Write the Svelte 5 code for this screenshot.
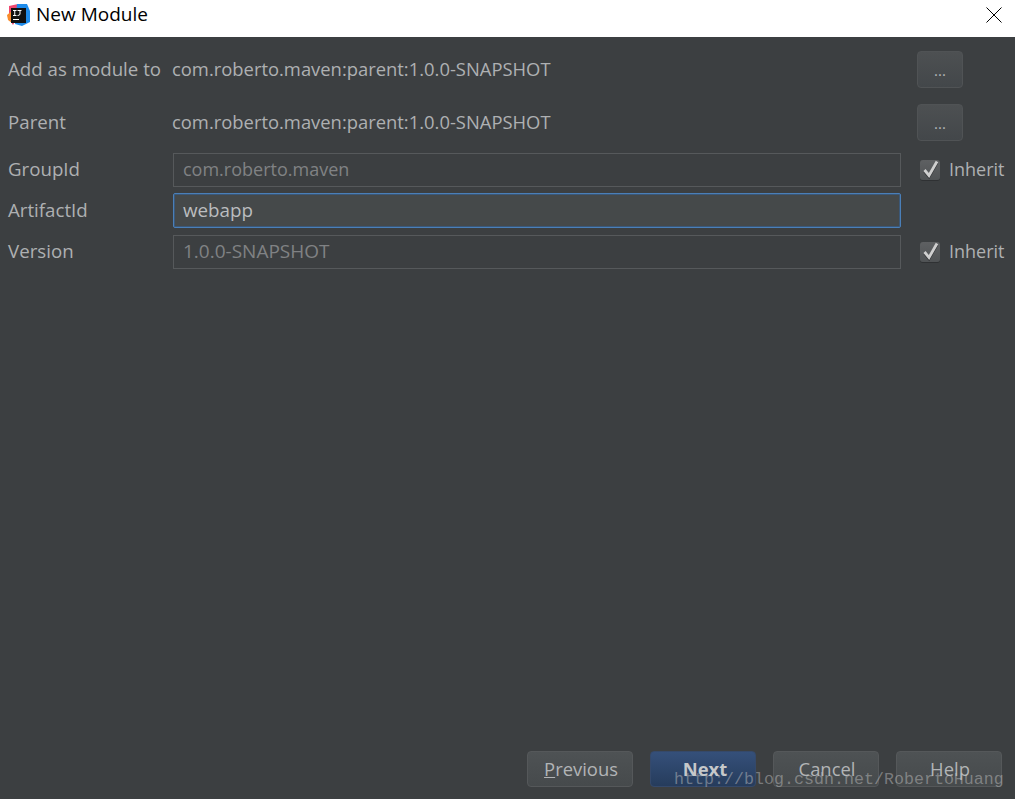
<script>
  const buttons = [
    { label: "Previous", mnemonic: "P", rest: "revious" },
    { label: "Next", primary: true },
    { label: "Cancel" },
    { label: "Help" }
  ];
</script>

<div class="dialog">
  <header class="titlebar">
    <svg class="logo" viewBox="0 0 24 24" width="24" height="24" aria-hidden="true">
      <path d="M2 3 L11 1 L15 6 L6 22 L2 16 Z" fill="#f0476f" />
      <path d="M0 12 L6 7 L9 14 L5 20 L1 17 Z" fill="#f98b2b" />
      <path d="M10 1 L20 1 L23 8 L23 19 L15 23 L8 21 Z" fill="#1f8ceb" />
      <rect x="4" y="5" width="15" height="15" fill="#111" />
      <rect x="6" y="16" width="6" height="1" fill="#fff" />
      <path d="M6 7.5 H9.5 M7.75 7.5 V12.5 M6 12.5 H9.5 M10.5 7.5 H14.5 M13 7.5 V11 Q13 12.5 10.5 12.5" stroke="#fff" stroke-width="1" fill="none" />
    </svg>
    <span class="title">New Module</span>
    <svg class="close" viewBox="0 0 16 16" width="16" height="16" aria-hidden="true">
      <path d="M0.5 0.5 L15.5 15.5 M15.5 0.5 L0.5 15.5" stroke="#000" stroke-width="1" fill="none" />
    </svg>
  </header>

  <main class="body">
    <div class="row tall">
      <span class="label">Add as module to</span>
      <span class="value">com.roberto.maven:parent:1.0.0-SNAPSHOT</span>
      <button class="browse">...</button>
    </div>
    <div class="row tall second">
      <span class="label">Parent</span>
      <span class="value">com.roberto.maven:parent:1.0.0-SNAPSHOT</span>
      <button class="browse">...</button>
    </div>

    <div class="row field first">
      <span class="label">GroupId</span>
      <div class="input disabled group">com.roberto.maven</div>
      <label class="inherit">
        <span class="check">
          <svg viewBox="0 0 20 20" width="20" height="20" aria-hidden="true">
            <path d="M4.5 11 L9 16.5 L17 2.5" stroke="#333537" stroke-width="3" fill="none" />
            <path d="M4.5 10 L9 15.5 L17 1.5" stroke="#cfcfcf" stroke-width="2.8" fill="none" />
          </svg>
        </span>Inherit
      </label>
    </div>
    <div class="row field focus-row">
      <span class="label">ArtifactId</span>
      <div class="input focused">webapp</div>
    </div>
    <div class="row field last">
      <span class="label">Version</span>
      <div class="input disabled version">1.0.0-SNAPSHOT</div>
      <label class="inherit">
        <span class="check">
          <svg viewBox="0 0 20 20" width="20" height="20" aria-hidden="true">
            <path d="M4.5 11 L9 16.5 L17 2.5" stroke="#333537" stroke-width="3" fill="none" />
            <path d="M4.5 10 L9 15.5 L17 1.5" stroke="#cfcfcf" stroke-width="2.8" fill="none" />
          </svg>
        </span>Inherit
      </label>
    </div>

    <footer class="actions">
      {#each buttons as b}
        <button class="action" class:primary={b.primary}>
          {#if b.mnemonic}<u>{b.mnemonic}</u>{b.rest}{:else}{b.label}{/if}
        </button>
      {/each}
    </footer>
  </main>

  <div class="watermark">http://blog.csdn.net/RobertoHuang</div>
</div>

<style>
  :global(body) {
    margin: 0;
    overflow: hidden;
  }

  .dialog {
    position: relative;
    width: 1015px;
    height: 799px;
    display: flex;
    flex-direction: column;
    background: #3c3f41;
    font-family: "Open Sans", "Noto Sans", sans-serif;
    font-size: 18.4px;
    color: #aeb0b2;
  }

  .titlebar {
    height: 37px;
    box-sizing: border-box;
    flex: none;
    display: flex;
    align-items: flex-start;
    background: #fff;
    color: #000;
    padding: 3px 13px 0 7px;
  }

  .logo {
    margin-right: 5px;
  }

  .title {
    font-size: 19px;
    line-height: 22px;
  }

  .close {
    margin-left: auto;
    margin-top: 4px;
  }

  .body {
    flex: 1;
    display: flex;
    flex-direction: column;
    padding: 14px 13px 12px 8px;
    min-height: 0;
  }

  .row {
    display: flex;
    align-items: center;
    line-height: 34px;
  }

  .row.tall {
    height: 37px;
  }

  .row.second {
    margin-top: 16px;
  }

  .label {
    width: 164px;
    flex: none;
    white-space: nowrap;
    position: relative;
    top: -1px;
    font-size: 18.7px;
  }

  .value {
    width: 745px;
    flex: none;
    white-space: nowrap;
    position: relative;
    top: -1px;
  }

  .browse {
    width: 46px;
    height: 37px;
    padding: 0;
    border: 1px solid #505355;
    border-radius: 4px;
    background: linear-gradient(#4d5052, #43474a);
    color: #b4b6b8;
    font: inherit;
    font-size: 15px;
  }

  .row.field {
    height: 34px;
  }

  .row.first {
    margin-top: 12px;
  }

  .row.focus-row {
    height: 35px;
    margin-top: 6px;
  }

  .row.last {
    margin-top: 7px;
  }

  .input {
    box-sizing: border-box;
    width: 728px;
    height: 34px;
    margin-left: 1px;
    padding: 0 9px 2px;
    flex: none;
    display: flex;
    align-items: center;
    border: 1px solid #56595b;
    white-space: nowrap;
  }

  .input.disabled {
    color: #808284;
  }

  .input.group {
    font-size: 18px;
  }

  .input.version {
    font-size: 19px;
  }

  .input.focused {
    height: 35px;
    background: #45494a;
    border: 1px solid #4a7fb8;
    border-radius: 2px;
    box-shadow: inset 0 0 0 1px #3b5878;
    color: #bbbdbf;
    font-size: 18.8px;
  }

  .inherit {
    display: flex;
    align-items: center;
    margin-left: 19px;
    white-space: nowrap;
    font-size: 18px;
    position: relative;
    top: -1px;
  }

  .check {
    box-sizing: border-box;
    width: 20px;
    height: 20px;
    margin-right: 9px;
    border-radius: 3px;
    background: linear-gradient(#5e6062, #505355);
    box-shadow: 0 1px 0 #2f3133;
    position: relative;
    top: 1px;
  }

  .check svg {
    display: block;
  }

  .actions {
    margin-top: auto;
    display: flex;
    justify-content: flex-end;
    gap: 17px;
  }

  .action {
    box-sizing: border-box;
    width: 106px;
    height: 36px;
    padding: 0 0 0 2px;
    border: 1px solid #55585a;
    border-radius: 4px;
    background: linear-gradient(#4e5254, #464a4c);
    color: #b2b4b6;
    font: inherit;
    line-height: 1;
  }

  .action.primary {
    background: linear-gradient(#35507a, #263c5c);
    border-color: #35496a;
    color: #c6c8ca;
    font-weight: 700;
    padding-left: 4px;
  }

  .watermark {
    position: absolute;
    left: 674px;
    top: 770px;
    font-family: "Liberation Mono", monospace;
    font-size: 16.67px;
    color: rgba(200, 200, 200, 0.45);
    white-space: nowrap;
    pointer-events: none;
  }
</style>
